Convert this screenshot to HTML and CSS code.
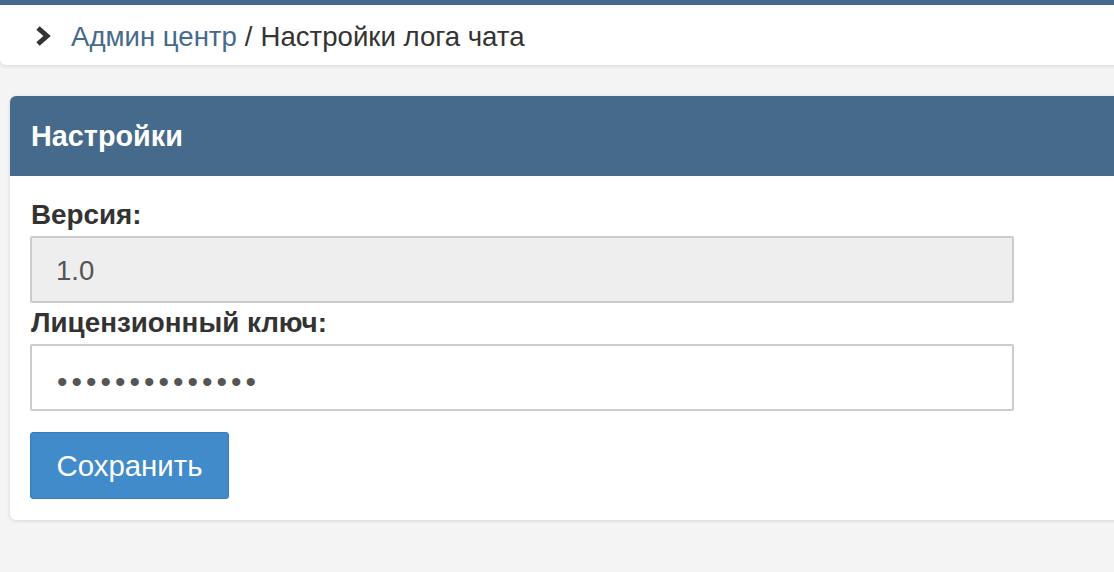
FILE: index.html
```html
<!DOCTYPE html>
<html lang="ru">
<head>
<meta charset="utf-8">
<title>Настройки лога чата</title>
<link rel="stylesheet" href="styles.css">
</head>
<body>
<nav class="crumbs">
  <svg class="chev" width="17" height="22" viewBox="0 0 17 22" aria-hidden="true">
    <polyline points="3,3 12,11 3,19" fill="none" stroke="#333" stroke-width="5" stroke-linejoin="miter" stroke-linecap="butt"/>
  </svg>
  <a class="crumb-link" href="#">Админ центр</a>
  <span class="crumb-sep">/</span>
  <span class="crumb-current">Настройки лога чата</span>
</nav>

<section class="panel">
  <header class="panel-head">Настройки</header>
  <form class="panel-body">
    <label class="field-label" for="ver">Версия:</label>
    <input class="field field-disabled" id="ver" type="text" value="1.0" disabled>
    <label class="field-label" for="key">Лицензионный ключ:</label>
    <input class="field field-secret" id="key" type="password" value="12345678901234">
    <button class="btn" type="button">Сохранить</button>
  </form>
</section>
</body>
</html>
```
FILE: styles.css
```css
* { box-sizing: border-box; }

html, body { margin: 0; padding: 0; }

body {
  background: #f4f4f4;
  border-top: 5px solid #456a8b;
  font-family: "Liberation Sans", Arial, sans-serif;
  color: #333;
  overflow: hidden;
  height: 572px;
}

.crumbs {
  display: flex;
  align-items: center;
  height: 60px;
  background: #fff;
  border-radius: 0 0 6px 6px;
  box-shadow: 0 1px 4px rgba(0, 0, 0, 0.12);
  padding: 3px 0 0 35px;
  margin-right: -10px;
  font-size: 27.6px;
  line-height: 32px;
}

.chev { flex: none; margin-top: -1px; }

.crumb-link {
  color: #456a8b;
  text-decoration: none;
  margin-left: 19px;
}

.crumb-sep { margin: 0 8px; }

.panel {
  margin: 31px -20px 0 10px;
  background: #fff;
  border-radius: 6px;
  box-shadow: 0 1px 4px rgba(0, 0, 0, 0.12);
}

.panel-head {
  height: 80px;
  display: flex;
  align-items: center;
  padding-left: 21px;
  background: #456a8b;
  color: #fff;
  font-weight: bold;
  font-size: 28.8px;
  border-radius: 6px 6px 0 0;
}

.panel-body {
  display: flex;
  flex-direction: column;
  align-items: flex-start;
  padding: 23px 20px 21px 20px;
}

.field-label {
  display: block;
  font-weight: bold;
  font-size: 27.8px;
  line-height: 32px;
  margin: 0 0 5px 1px;
}

.field-label + .field + .field-label { margin-top: 4px; }

.field {
  width: 984px;
  height: 67px;
  border: 2px solid #ccc;
  border-radius: 2px;
  background: #fff;
  padding: 0 24px;
  font-family: "Liberation Sans", Arial, sans-serif;
  font-size: 27.6px;
  color: #555;
  -webkit-text-fill-color: #555;
  outline: none;
}

.field-secret {
  font-size: 30px;
  letter-spacing: 4px;
  padding-left: 25px;
  padding-top: 8px;
}

.field-disabled {
  background: #eee;
  opacity: 1;
  padding-top: 3px;
}

.btn {
  margin-top: 21px;
  width: 199px;
  height: 67px;
  background: #428bca;
  border: 1px solid #357ebd;
  border-radius: 3px;
  color: #fff;
  font-family: "Liberation Sans", Arial, sans-serif;
  font-size: 29.4px;
  padding: 0;
  cursor: pointer;
}
```
